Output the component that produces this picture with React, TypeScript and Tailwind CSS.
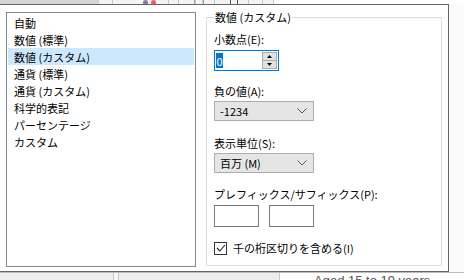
import React from "react";

const ui = "font-['Noto_Sans_CJK_JP','Noto_Sans',sans-serif] text-[11px] leading-[16px] text-black";

const categories = [
  "自動",
  "数値 (標準)",
  "数値 (カスタム)",
  "通貨 (標準)",
  "通貨 (カスタム)",
  "科学的表記",
  "パーセンテージ",
  "カスタム",
];

function Chevron() {
  return (
    <svg width="10" height="6" viewBox="0 0 10 6" className="mr-[6px]">
      <path d="M0.5 0.5 L5 5 L9.5 0.5" fill="none" stroke="#555" strokeWidth="1" />
    </svg>
  );
}

function Select({ value }: { value: string }) {
  return (
    <div className="flex h-[20px] w-[100px] items-center justify-between border border-[#adadad] bg-[#e5e5e5] pl-[5px]">
      <span>{value}</span>
      <Chevron />
    </div>
  );
}

function SpinBox() {
  return (
    <div className="mt-[3px] flex h-[21px] w-[65px] items-center justify-between border border-[#0078d7] bg-white pl-[1px] pr-[1px]">
      <span className="flex h-[15px] w-[7px] items-center justify-center bg-[#0078d7] text-white">0</span>
      <div className="flex h-[17px] w-[15px] flex-col">
        <div className="flex h-[8.5px] items-center justify-center border border-[#adadad] bg-[#e1e1e1]">
          <svg width="5" height="3" viewBox="0 0 5 3"><path d="M0 3 L2.5 0 L5 3Z" fill="#000" /></svg>
        </div>
        <div className="flex h-[8.5px] items-center justify-center border border-t-0 border-[#adadad] bg-[#e1e1e1]">
          <svg width="5" height="3" viewBox="0 0 5 3"><path d="M0 0 L2.5 3 L5 0Z" fill="#000" /></svg>
        </div>
      </div>
    </div>
  );
}

export default function App() {
  return (
    <div className={`flex h-[280px] w-[464px] flex-col overflow-hidden bg-white ${ui}`}>
      {/* sheet toolbar peeking above */}
      <div className="flex h-[4px] shrink-0 items-center bg-[#d6d6d6]">
        <div className="h-full w-[98px]" />
        <div className="flex h-full flex-1 items-center bg-[#f4f4f4]">
          <div className="h-full w-[14px] border-l border-[#c8c8c8]" />
          <div className="h-full w-[19px] border-l border-[#c8c8c8]" />
          <div className="ml-[12px] flex gap-[3px]">
            <span className="h-[5px] w-[5px] rounded-full bg-[#8a7aa8]" />
            <span className="h-[5px] w-[5px] rounded-full bg-[#e06070]" />
          </div>
          <div className="ml-[12px] h-full w-[10px] border-l border-[#c8c8c8]" />
          <div className="h-full w-[16px] border-l border-[#c8c8c8]" />
          <span className="h-[8px] w-[10px] rounded-full border border-[#777]" />
          <div className="ml-[10px] h-full w-[16px] border-l border-[#c8c8c8]" />
          <span className="h-[6px] w-[8px] border border-[#555]" />
          <div className="ml-[10px] h-full w-[14px] border-l border-[#c8c8c8]" />
          <div className="h-full w-[11px] border-l border-[#c8c8c8]" />
          <div className="h-full flex-1 border-l border-[#c8c8c8] bg-white" />
        </div>
      </div>

      <div className="flex h-[268px] shrink-0">
        {/* format dialog */}
        <div className="flex h-full w-[449px] border-y border-r border-[#646464] bg-white">
          <div className="ml-[6px] mt-[7px] h-[255px] w-[190px] border border-[#828790] pt-[1px]">
            {categories.map((c, i) => (
              <div
                key={c}
                className={`mx-[1px] flex h-[17px] items-center pl-[6px] ${i === 2 ? "bg-[#cce8ff]" : ""}`}
              >
                {c}
              </div>
            ))}
          </div>

          <fieldset className="ml-[10px] mt-[4px] h-[257px] w-[236px] border border-t-0 border-[#dcdcdc] px-[7px]">
            <legend className="-ml-[7px] w-[calc(100%+14px)]">
              <div className="flex items-center">
                <div className="h-px w-[7px] bg-[#dcdcdc]" />
                <span className="px-[1px]">数値 (カスタム)</span>
                <div className="h-px flex-1 bg-[#dcdcdc]" />
              </div>
            </legend>
            <div className="mt-[6px]">小数点(E):</div>
            <SpinBox />
            <div className="mt-[12px]">負の値(A):</div>
            <div className="mt-[2px]">
              <Select value="-1234" />
            </div>
            <div className="mt-[14px]">表示単位(S):</div>
            <div className="mt-[2px]">
              <Select value="百万 (M)" />
            </div>
            <div className="mt-[13px]">プレフィックス/サフィックス(P):</div>
            <div className="mt-[3px] flex gap-[10px]">
              <div className="h-[22px] w-[45px] border border-[#7a7a7a] bg-white" />
              <div className="h-[22px] w-[45px] border border-[#7a7a7a] bg-white" />
            </div>
            <label className="mt-[13px] flex items-center gap-[6px]">
              <span className="flex h-[13px] w-[13px] items-center justify-center border border-[#333]">
                <svg width="10" height="8" viewBox="0 0 10 8">
                  <path d="M1 4 L3.8 7 L9 1" fill="none" stroke="#222" strokeWidth="1.1" />
                </svg>
              </span>
              <span>千の桁区切りを含める(I)</span>
            </label>
          </fieldset>
        </div>
        <div className="h-full flex-1 bg-[#fbfbfb]" />
      </div>

      {/* spreadsheet row below the dialog */}
      <div className="flex h-[8px] shrink-0 border-t border-[#bdbdbd]">
        <div className="h-full w-[113px] bg-[#eeeeee]" />
        <div className="h-full w-[6px] border-x border-[#c8c8c8] bg-[#f6f6f6]" />
        <div className="h-full w-[160px] bg-[#eeeeee]" />
        <div className="flex h-full flex-1 border-l border-[#c8c8c8] bg-white pl-[34px]">
          <span className="font-['Liberation_Sans',sans-serif] text-[13px] leading-[15px] text-[#555]">Aged 15 to 19 years</span>
        </div>
      </div>
    </div>
  );
}
